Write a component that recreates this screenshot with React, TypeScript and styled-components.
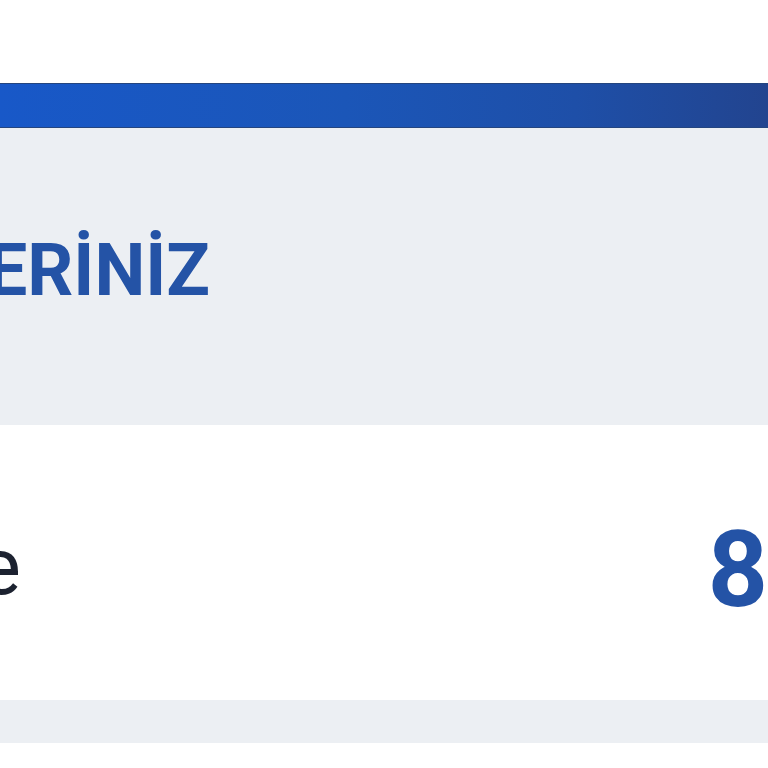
import React from "react";
import styled, { createGlobalStyle } from "styled-components";

const GlobalStyle = createGlobalStyle`
  html, body {
    margin: 0;
    padding: 0;
    background: #ffffff;
    overflow: hidden;
  }
  body {
    font-family: Roboto, "Noto Sans", "Liberation Sans", sans-serif;
  }
`;

const Page = styled.div`
  display: flex;
  flex-direction: column;
  width: 768px;
  padding-top: 83px;
  background: #ffffff;
`;

const AccentBar = styled.div`
  height: 43px;
  background: linear-gradient(90deg, #1858c8 0%, #1b56b8 45%, #1e4fa8 75%, #22448f 100%);
  border-top: 1px solid #24457f;
  border-bottom: 1px solid #24457f;
`;

const Header = styled.div`
  box-sizing: border-box;
  height: 297px;
  background: #eceff3;
  display: flex;
  align-items: flex-start;
  padding-top: 107px;
`;

const TitleClip = styled.div`
  width: 210px;
  display: flex;
  justify-content: flex-end;
`;

const Title = styled.h2`
  margin: 0;
  white-space: nowrap;
  font-size: 72px;
  line-height: 1;
  font-weight: 700;
  color: #2453a6;
`;

const Row = styled.div`
  box-sizing: border-box;
  height: 275px;
  background: #ffffff;
  display: flex;
  align-items: flex-start;
  justify-content: space-between;
`;

const LabelClip = styled.div<{ $top: number }>`
  width: 21px;
  display: flex;
  justify-content: flex-end;
  margin-top: ${(p) => p.$top}px;
`;

const Label = styled.span`
  white-space: nowrap;
  font-size: 80px;
  line-height: 1;
  font-weight: 400;
  color: #1c2230;
`;

const Value = styled.span<{ $top: number }>`
  white-space: nowrap;
  font-size: 105px;
  line-height: 1;
  font-weight: 700;
  color: #2453a6;
  margin-top: ${(p) => p.$top}px;
`;

const Divider = styled.div`
  height: 43px;
  background: #eceff3;
`;

const Spacer = styled.div`
  height: 25px;
  background: #ffffff;
`;

export default function App() {
  return (
    <>
      <GlobalStyle />
      <Page>
        <AccentBar />
        <Header>
          <TitleClip>
            <Title>SİPARİŞLERİNİZ</Title>
          </TitleClip>
        </Header>
        <Row>
          <LabelClip $top={102}>
            <Label>Beklemede</Label>
          </LabelClip>
          <Value $top={93}>8</Value>
        </Row>
        <Divider />
        <Spacer />
      </Page>
    </>
  );
}
